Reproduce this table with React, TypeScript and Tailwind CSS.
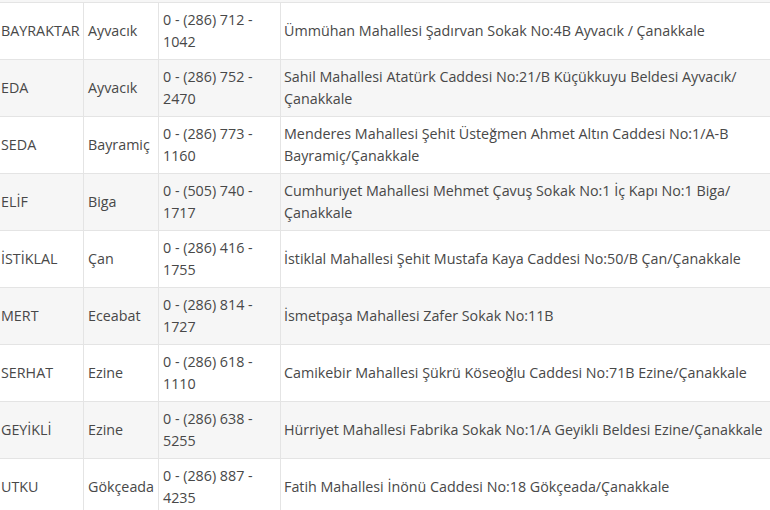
import React from "react";

interface Pharmacy {
  name: string;
  town: string;
  phone: string;
  address: React.ReactNode;
}

const rows: Pharmacy[] = [
  {
    name: "BAYRAKTAR",
    town: "Ayvacık",
    phone: "0 - (286) 712 - 1042",
    address: "Ümmühan Mahallesi Şadırvan Sokak No:4B Ayvacık / Çanakkale",
  },
  {
    name: "EDA",
    town: "Ayvacık",
    phone: "0 - (286) 752 - 2470",
    address: (
      <>
        Sahil Mahallesi Atatürk Caddesi No:21/B Küçükkuyu Beldesi Ayvacık/
        <wbr />
        Çanakkale
      </>
    ),
  },
  {
    name: "SEDA",
    town: "Bayramiç",
    phone: "0 - (286) 773 - 1160",
    address:
      "Menderes Mahallesi Şehit Üsteğmen Ahmet Altın Caddesi No:1/A-B Bayramiç/Çanakkale",
  },
  {
    name: "ELİF",
    town: "Biga",
    phone: "0 - (505) 740 - 1717",
    address: (
      <>
        Cumhuriyet Mahallesi Mehmet Çavuş Sokak No:1 İç Kapı No:1 Biga/
        <wbr />
        Çanakkale
      </>
    ),
  },
  {
    name: "İSTİKLAL",
    town: "Çan",
    phone: "0 - (286) 416 - 1755",
    address: "İstiklal Mahallesi Şehit Mustafa Kaya Caddesi No:50/B Çan/Çanakkale",
  },
  {
    name: "MERT",
    town: "Eceabat",
    phone: "0 - (286) 814 - 1727",
    address: "İsmetpaşa Mahallesi Zafer Sokak No:11B",
  },
  {
    name: "SERHAT",
    town: "Ezine",
    phone: "0 - (286) 618 - 1110",
    address: "Camikebir Mahallesi Şükrü Köseoğlu Caddesi No:71B Ezine/Çanakkale",
  },
  {
    name: "GEYİKLİ",
    town: "Ezine",
    phone: "0 - (286) 638 - 5255",
    address:
      "Hürriyet Mahallesi Fabrika Sokak No:1/A Geyikli Beldesi Ezine/Çanakkale",
  },
  {
    name: "UTKU",
    town: "Gökçeada",
    phone: "0 - (286) 887 - 4235",
    address: "Fatih Mahallesi İnönü Caddesi No:18 Gökçeada/Çanakkale",
  },
];

export default function App() {
  return (
    <div
      className="w-[770px] h-[510px] overflow-hidden bg-white text-[14.3px] leading-[22px] text-[#484848]"
      style={{ fontFamily: '"Open Sans", "Noto Sans", sans-serif' }}
    >
      <div className="h-[2px] bg-[#f6f6f6]" />
      <table className="-ml-[5px] w-[790px] table-fixed border-collapse">
        <colgroup>
          <col className="w-[88px]" />
          <col className="w-[75px]" />
          <col className="w-[122px]" />
          <col />
        </colgroup>
        <tbody>
          {rows.map((row, i) => (
            <tr
              key={row.name}
              className={i % 2 === 1 ? "bg-[#f6f6f6]" : "bg-white"}
            >
              <td className="h-[57px] border border-[#e4e4e4] px-[5px] py-[6px] align-middle">
                {row.name}
              </td>
              <td className="border border-[#e4e4e4] px-[4px] py-[6px] align-middle">
                {row.town}
              </td>
              <td className="border border-[#e4e4e4] px-[4px] py-[6px] align-middle">
                {row.phone}
              </td>
              <td className="border border-[#e4e4e4] px-[3px] py-[6px] align-middle">
                {row.address}
              </td>
            </tr>
          ))}
        </tbody>
      </table>
    </div>
  );
}
